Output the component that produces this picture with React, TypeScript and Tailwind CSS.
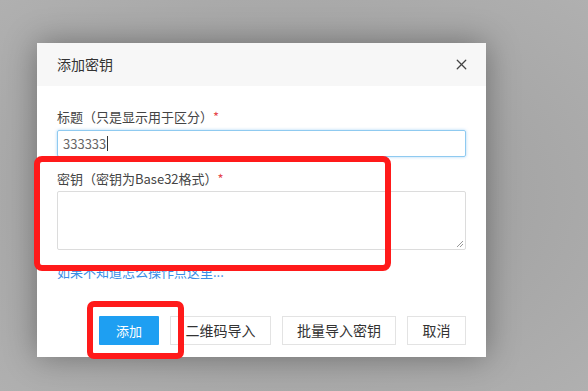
import { X } from 'lucide-react';

const font = { fontFamily: '"Noto Sans CJK SC", "Noto Sans", sans-serif' };

export default function App() {
    return (
        <div
            className="relative w-[588px] h-[391px] overflow-hidden bg-[radial-gradient(ellipse_at_center,#9a9a9a_0%,#a6a6a6_55%,#b0b0b0_100%)] pl-[37px] pt-[43px]"
            style={font}
        >
            <div className="flex flex-col w-[449px] h-[314px] bg-white shadow-[0_0_30px_rgba(0,0,0,0.35)]">
                <header className="flex items-center justify-between h-[43px] px-[20px] bg-[#f7f7f7]">
                    <span className="text-[14px] text-[#333]">添加密钥</span>
                    <X size={17} strokeWidth={1.8} className="text-[#444] -mr-[4px]" />
                </header>

                <div className="flex flex-col px-[20px] pt-[21px]">
                    <label className="text-[13px] leading-[20px] text-[#444]">
                        标题（只是显示用于区分）<span className="text-[#e5484d]">*</span>
                    </label>
                    <div className="mt-[3px] h-[27px] rounded-[2px] border border-[#8fcaf0] shadow-[0_0_3px_rgba(80,170,240,0.5)] px-[5px] flex items-center text-[13px] text-[#666]">
                        333333<span className="w-px h-[15px] bg-[#333] ml-px" />
                    </div>

                    <label className="mt-[12px] text-[13px] leading-[20px] text-[#444]">
                        密钥（密钥为Base32格式）<span className="text-[#e5484d]">*</span>
                    </label>
                    <div className="relative mt-[2px] h-[59px] rounded-[2px] border border-[#dcdcdc]">
                        <svg className="absolute right-[1px] bottom-[1px]" width="8" height="8" viewBox="0 0 8 8">
                            <path d="M7 1 L1 7 M7 4 L4 7" stroke="#999" strokeWidth="1" />
                        </svg>
                    </div>

                    <a className="mt-[14px] text-[13px] leading-[16px] text-[#3a8ee6]">如果不知道怎么操作点这里...</a>
                </div>

                <div className="mt-auto mb-[12px] flex justify-end gap-[11px] pr-[20px]">
                    <button className="w-[60px] h-[29px] bg-[#1e9ff2] text-white text-[13px] rounded-[1px]">添加</button>
                    <button className="w-[101px] h-[29px] border border-[#e3e3e3] text-[14px] text-[#333]">二维码导入</button>
                    <button className="w-[114px] h-[29px] border border-[#e3e3e3] text-[14px] text-[#333]">批量导入密钥</button>
                    <button className="w-[59px] h-[29px] border border-[#e3e3e3] text-[14px] text-[#333]">取消</button>
                </div>
            </div>

            {/* annotation boxes */}
            <div className="absolute left-[34px] top-[156px] w-[357px] h-[115px] rounded-[8px] border-[6px] border-[#ff1a1a]" />
            <div className="absolute left-[87px] top-[301px] w-[97px] h-[58px] rounded-[7px] border-[6px] border-[#ff1a1a]" />
        </div>
    );
}
